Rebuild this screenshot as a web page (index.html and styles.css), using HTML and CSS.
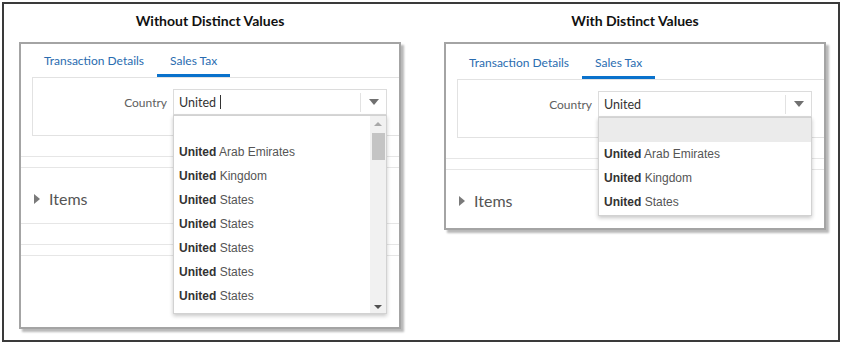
FILE: index.html
```html
<!DOCTYPE html>
<html lang="en">
<head>
  <meta charset="UTF-8">
  <title>Distinct Values</title>
  <link rel="stylesheet" href="styles.css">
</head>
<body>

  <div class="frame">

    <!-- Sans valeurs distinctes -->
    <section class="col">
      <h2 class="title">Without Distinct Values</h2>
      <div class="panel panel-long">
        <div class="tabs">
          <span class="tab">Transaction Details</span>
          <span class="tab active">Sales Tax</span>
        </div>
        <div class="form-box">
          <div class="form-row">
            <label class="field-label">Country</label>
            <div class="combo">
              <div class="combo-input">
                <span class="combo-text">United</span><span class="caret"></span>
                <span class="combo-btn"><span class="arrow-down"></span></span>
              </div>
              <div class="dropdown dropdown-long">
                <ul class="options">
                  <li class="blank"></li>
                  <li><b>United</b> Arab Emirates</li>
                  <li><b>United</b> Kingdom</li>
                  <li><b>United</b> States</li>
                  <li><b>United</b> States</li>
                  <li><b>United</b> States</li>
                  <li><b>United</b> States</li>
                  <li><b>United</b> States</li>
                </ul>
                <div class="scrollbar">
                  <span class="sb-up"><span class="tri-up"></span></span>
                  <span class="sb-thumb"></span>
                  <span class="sb-fill"></span>
                  <span class="sb-down"><span class="tri-down"></span></span>
                </div>
              </div>
            </div>
          </div>
        </div>
        <div class="double-rule"></div>
        <div class="section-row"><span class="disclosure"></span>Items</div>
        <div class="double-rule"></div>
      </div>
    </section>

    <!-- Avec valeurs distinctes -->
    <section class="col">
      <h2 class="title">With Distinct Values</h2>
      <div class="panel panel-short">
        <div class="tabs">
          <span class="tab">Transaction Details</span>
          <span class="tab active">Sales Tax</span>
        </div>
        <div class="form-box">
          <div class="form-row">
            <label class="field-label">Country</label>
            <div class="combo">
              <div class="combo-input">
                <span class="combo-text">United</span>
                <span class="combo-btn"><span class="arrow-down"></span></span>
              </div>
              <div class="dropdown">
                <ul class="options">
                  <li class="blank selected"></li>
                  <li><b>United</b> Arab Emirates</li>
                  <li><b>United</b> Kingdom</li>
                  <li><b>United</b> States</li>
                </ul>
              </div>
            </div>
          </div>
        </div>
        <div class="double-rule"></div>
        <div class="section-row last"><span class="disclosure"></span>Items</div>
      </div>
    </section>

  </div>

</body>
</html>
```

FILE: styles.css
```css
body {
  margin: 2px;
  background-color: #fff;
  font-family: Lato, "Open Sans", sans-serif;
}

.frame {
  box-sizing: border-box;
  width: 838px;
  height: 340px;
  border: 2px solid #3a3a3a;
  display: flex;
  gap: 43px;
  padding: 0 12px 0 15px;
}

.col {
  width: 382px;
}

.title {
  margin: 0;
  height: 38px;
  padding-top: 9px;
  box-sizing: border-box;
  text-align: center;
  font-size: 14px;
  line-height: 16px;
  font-weight: bold;
  color: #111;
}

/* Le panneau gris avec ombre */
.panel {
  box-sizing: border-box;
  width: 382px;
  border: 2px solid #a4a4a4;
  box-shadow: 3px 3px 2px rgba(0, 0, 0, 0.28);
  background-color: #fff;
}

.panel-long {
  height: 287px;
}

.panel-short {
  height: 188px;
}

.panel-short .tabs {
  padding-top: 2px;
}

/* Onglets */
.tabs {
  display: flex;
  padding-left: 10px;
}

.tab {
  padding: 9px 13px 5px;
  font-size: 12px;
  line-height: 16px;
  color: #2a6cb0;
  border-bottom: 3px solid transparent;
}

.tab.active {
  border-bottom-color: #0a72cc;
}

/* Boite du formulaire */
.form-box {
  margin-left: 11px;
  border: 1px solid #e2e2e2;
  border-right: none;
}

.form-row {
  display: flex;
  align-items: center;
  padding: 11px 0 20px;
}

.field-label {
  width: 134px;
  margin-right: 6px;
  text-align: right;
  font-size: 12px;
  color: #606060;
}

.combo {
  position: relative;
  width: 214px;
}

.combo-input {
  box-sizing: border-box;
  height: 26px;
  border: 1px solid #dcdcdc;
  display: flex;
  align-items: center;
}

.combo-text {
  padding-left: 5px;
  font-size: 12.5px;
  color: #333;
}

.caret {
  width: 0;
  height: 14px;
  margin-left: 4px;
  border-left: 1px solid #333;
}

.combo-btn {
  margin-left: auto;
  width: 25px;
  height: 19px;
  border-left: 1px solid #e2e2e2;
  display: flex;
  justify-content: center;
  align-items: center;
}

.arrow-down {
  width: 0;
  height: 0;
  border-left: 5px solid transparent;
  border-right: 5px solid transparent;
  border-top: 6px solid #707070;
}

/* Liste deroulante */
.dropdown {
  position: absolute;
  top: 100%;
  left: 0;
  z-index: 2;
  box-sizing: border-box;
  width: 214px;
  border: 1px solid #d2d2d2;
  background-color: #fff;
  box-shadow: 0 2px 4px rgba(0, 0, 0, 0.22);
  display: flex;
  padding-bottom: 1px;
}

.dropdown-long {
  height: 199px;
  padding-bottom: 0;
}

.options {
  flex: 1;
  list-style: none;
  margin: 0;
  padding: 0;
  font-family: "Liberation Sans", Arial, sans-serif;
  font-size: 12px;
  color: #555;
}

.options li {
  height: 24px;
  line-height: 24px;
  padding-left: 5px;
}

.options b {
  color: #333;
}

.options li.selected {
  background-color: #ebebeb;
}

.scrollbar {
  width: 16px;
  box-sizing: border-box;
  padding: 0 1px;
  background-color: #f1f1f1;
  display: flex;
  flex-direction: column;
  align-items: center;
}

.sb-up {
  height: 16px;
  display: flex;
  align-items: center;
}

.tri-up {
  width: 0;
  height: 0;
  border-left: 4px solid transparent;
  border-right: 4px solid transparent;
  border-bottom: 4px solid #a8a8a8;
}

.sb-thumb {
  width: 13px;
  height: 27px;
  margin-top: 1px;
  background-color: #c4c4c4;
}

.sb-fill {
  flex: 1;
}

.sb-down {
  height: 12px;
  display: flex;
  align-items: center;
}

.tri-down {
  width: 0;
  height: 0;
  border-left: 4px solid transparent;
  border-right: 4px solid transparent;
  border-top: 4px solid #505050;
}

/* Lignes et section Items */
.double-rule {
  margin-top: 20px;
  height: 10px;
  border-top: 1px solid #e6e6e6;
  border-bottom: 1px solid #e6e6e6;
}

.section-row {
  display: flex;
  align-items: center;
  padding: 21px 0 14px 13px;
  line-height: 20px;
  font-size: 16px;
  color: #555;
  border-bottom: 1px solid #e6e6e6;
}

.section-row.last {
  border-bottom: none;
}

.disclosure {
  width: 0;
  height: 0;
  margin-right: 9px;
  border-top: 5px solid transparent;
  border-bottom: 5px solid transparent;
  border-left: 6px solid #7a7a7a;
}
```
